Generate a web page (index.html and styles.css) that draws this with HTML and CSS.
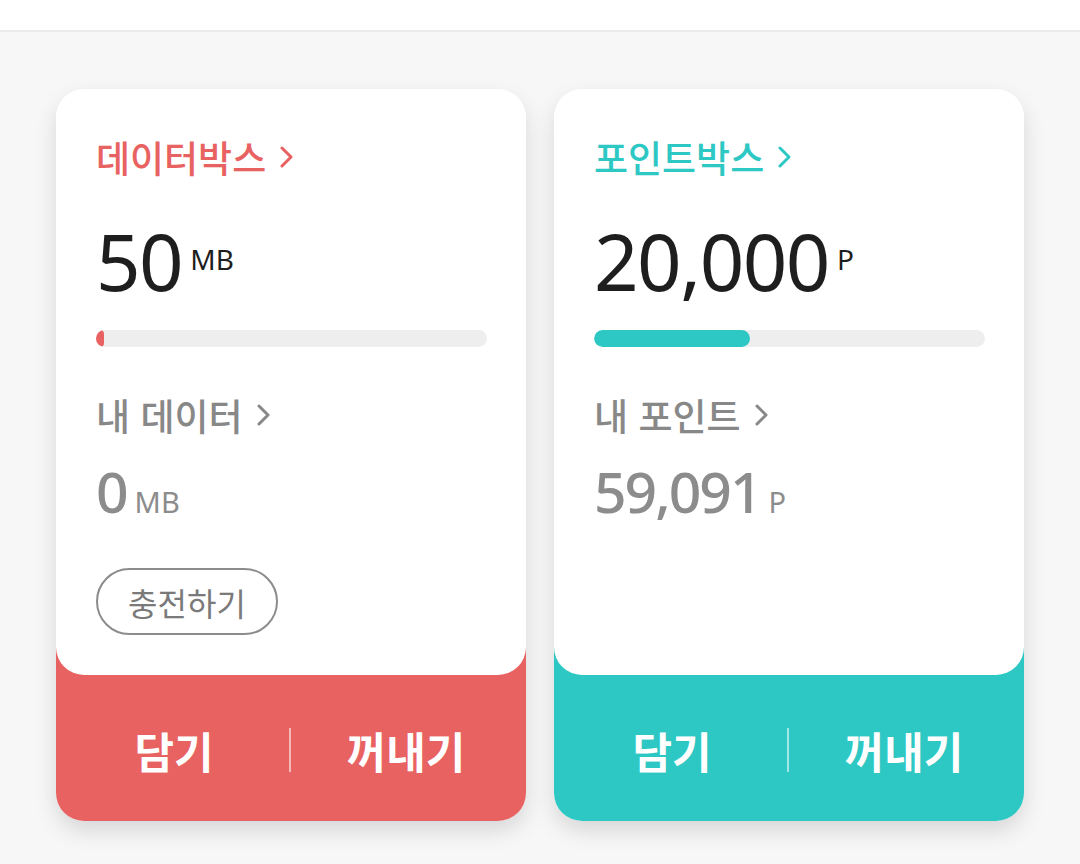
FILE: index.html
```html
<!DOCTYPE html>
<html lang="ko">
<head>
  <meta charset="UTF-8" />
  <meta name="viewport" content="width=device-width, initial-scale=1.0" />
  <title>박스</title>
  <link rel="stylesheet" href="styles.css">
</head>
<body>
  <header class="topbar"></header>

  <main class="boxes">
    <!-- data box -->
    <section class="box box-data">
      <div class="box-body">
        <a class="box-title">데이터박스
          <svg class="chev" width="14" height="24" viewBox="0 0 14 24"><path d="M2 3l9 9-9 9" /></svg>
        </a>
        <div class="amount"><span class="num">50</span><span class="unit">MB</span></div>
        <div class="bar"><div class="fill" style="width: 2%"></div></div>
        <a class="sub-title">내 데이터
          <svg class="chev" width="14" height="24" viewBox="0 0 14 24"><path d="M2 3l9 9-9 9" /></svg>
        </a>
        <div class="mine"><span class="num">0</span><span class="unit">MB</span></div>
        <button class="charge">충전하기</button>
      </div>
      <div class="box-foot">
        <span class="action">담기</span>
        <span class="divider"></span>
        <span class="action">꺼내기</span>
      </div>
    </section>

    <!-- point box -->
    <section class="box box-point">
      <div class="box-body">
        <a class="box-title">포인트박스
          <svg class="chev" width="14" height="24" viewBox="0 0 14 24"><path d="M2 3l9 9-9 9" /></svg>
        </a>
        <div class="amount"><span class="num">20,000</span><span class="unit">P</span></div>
        <div class="bar"><div class="fill" style="width: 40%"></div></div>
        <a class="sub-title">내 포인트
          <svg class="chev" width="14" height="24" viewBox="0 0 14 24"><path d="M2 3l9 9-9 9" /></svg>
        </a>
        <div class="mine"><span class="num">59,091</span><span class="unit">P</span></div>
      </div>
      <div class="box-foot">
        <span class="action">담기</span>
        <span class="divider"></span>
        <span class="action">꺼내기</span>
      </div>
    </section>
  </main>
</body>
</html>
```

FILE: styles.css
```css
body {
  margin: 0;
  background-color: #f7f7f7;
  font-family: 'Noto Sans', 'Noto Sans CJK KR', sans-serif;
  color: #222;
}

.topbar {
  height: 30px;
  background: #fff;
  border-bottom: 2px solid #ebebeb;
}

.boxes {
  display: flex;
  gap: 28px;
  padding: 57px 56px 60px;
}

.box {
  width: 470px;
  height: 732px;
  border-radius: 28px;
  overflow: hidden;
  display: flex;
  flex-direction: column;
  background: #fff;
  box-shadow: 0 10px 22px rgba(0, 0, 0, 0.13);
}

.box-data {
  --accent: #e86262;
}

.box-point {
  --accent: #2ec8c4;
}

.box-body {
  position: relative;
  z-index: 1;
  background: #fff;
  height: 586px;
  border-radius: 28px;
  padding: 46px 39px 0 40px;
  box-sizing: border-box;
}

.box-title,
.sub-title {
  display: flex;
  align-items: center;
  gap: 14px;
  font-family: 'Noto Sans CJK KR', sans-serif;
  font-weight: 500;
  font-size: 37px;
  line-height: 44px;
  color: var(--accent);
}

.chev {
  fill: none;
  stroke: currentColor;
  stroke-width: 3;
  stroke-linecap: round;
  stroke-linejoin: round;
}

.amount {
  display: flex;
  align-items: flex-start;
  margin-top: 39px;
  height: 86px;
}

.amount .num {
  font-size: 78px;
  line-height: 86px;
  color: #1e1e1e;
  letter-spacing: -1.5px;
}

.amount .unit {
  font-size: 28px;
  line-height: 28px;
  margin: 27px 0 0 8px;
  color: #1e1e1e;
}

.bar {
  margin-top: 26px;
  height: 17px;
  border-radius: 9px;
  background: #eeeeee;
  overflow: hidden;
}

.fill {
  height: 100%;
  min-width: 8px;
  border-radius: 9px;
  background: var(--accent);
}

.sub-title {
  margin-top: 46px;
  color: #888;
}

.mine {
  display: flex;
  align-items: baseline;
  margin-top: 21px;
  color: #8c8c8c;
}

.mine .num {
  font-size: 57px;
  font-weight: 500;
  line-height: 66px;
  letter-spacing: -2px;
}

.mine .unit {
  font-size: 29px;
  margin-left: 8px;
}

.charge {
  margin-top: 44px;
  width: 182px;
  height: 67px;
  border: 2px solid #8c8c8c;
  border-radius: 34px;
  background: #fff;
  font-family: 'Noto Sans CJK KR', sans-serif;
  font-size: 32px;
  color: #7a7a7a;
  padding: 0;
}

.box-foot {
  flex: 1;
  display: flex;
  align-items: center;
  justify-content: space-around;
  margin-top: -30px;
  padding: 34px 20px 0 18px;
  background: var(--accent);
  color: #fff;
}

.action {
  font-family: 'Noto Sans CJK KR', sans-serif;
  font-weight: 700;
  font-size: 43px;
  width: 170px;
  text-align: center;
}

.divider {
  width: 2px;
  height: 44px;
  background: rgba(255, 255, 255, 0.55);
}
```
